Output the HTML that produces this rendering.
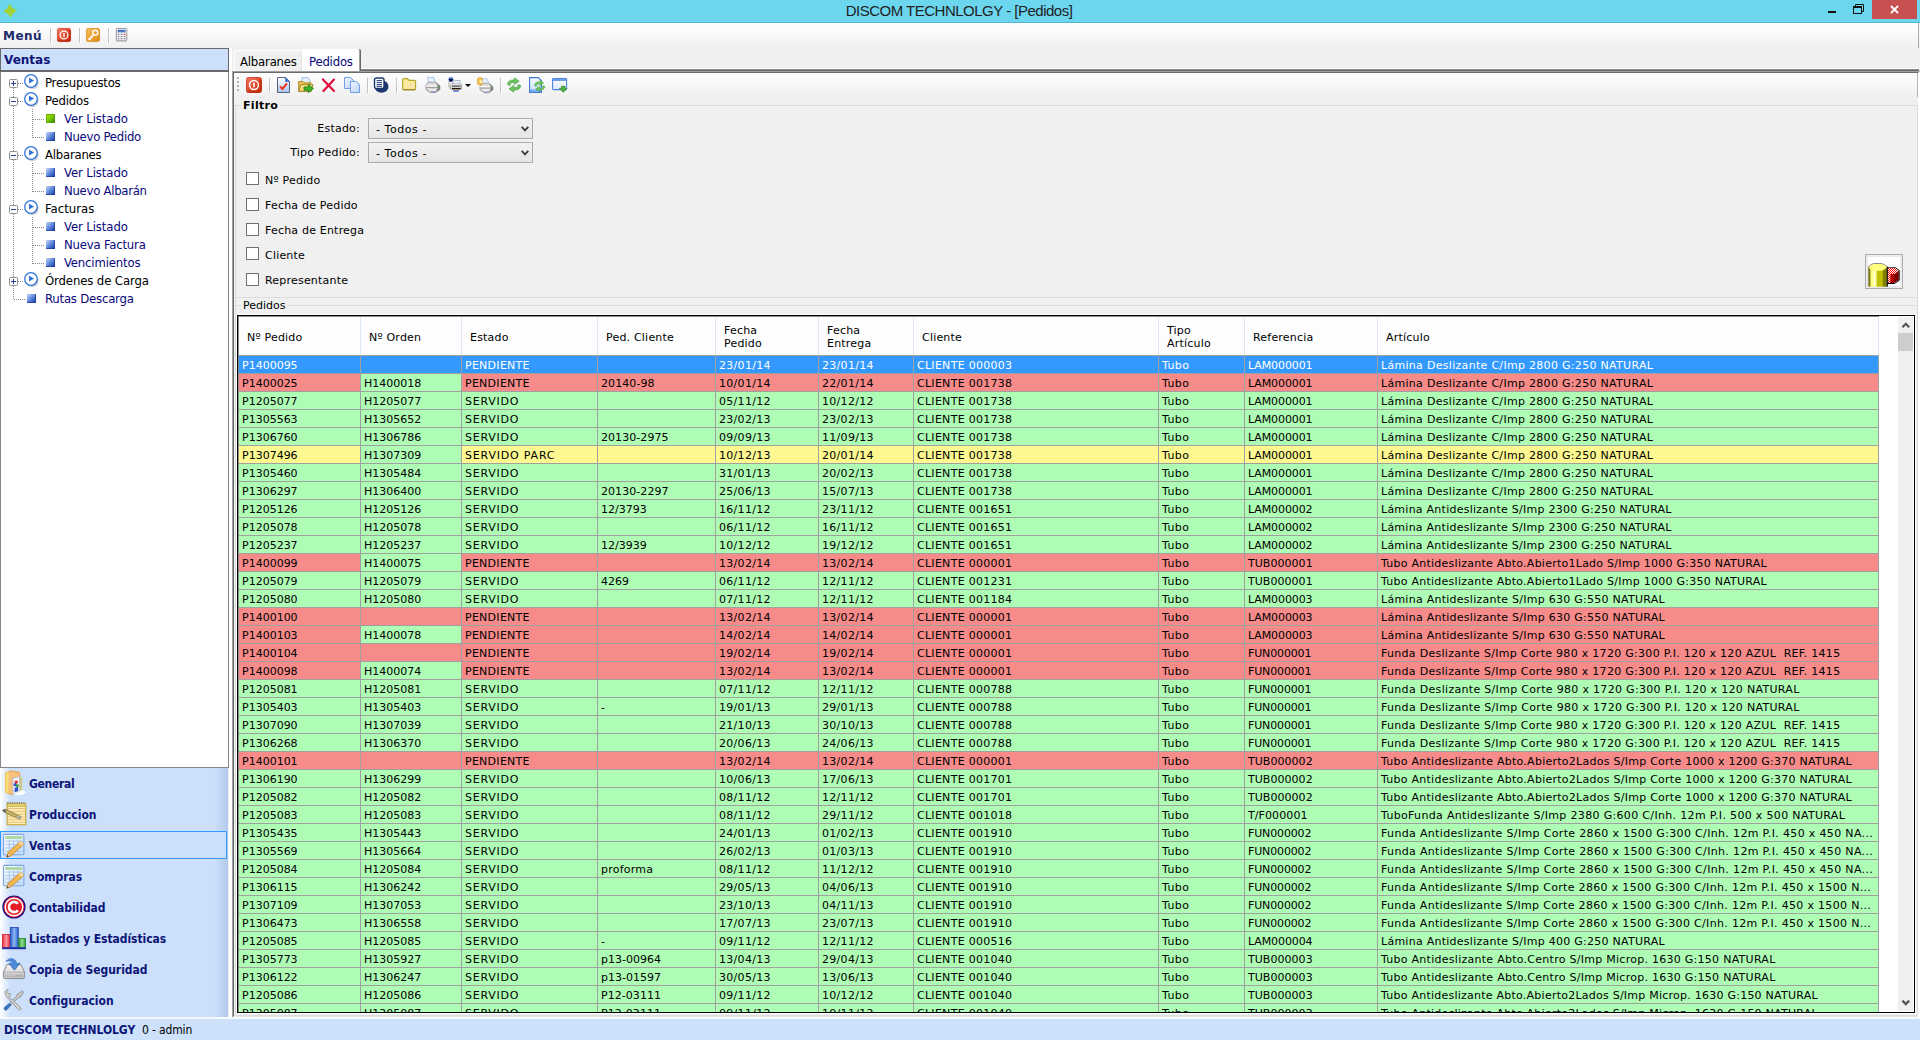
<!DOCTYPE html>
<html lang="es"><head><meta charset="utf-8"><title>DISCOM TECHNLOLGY - [Pedidos]</title>
<style>
*{box-sizing:border-box}
html,body{margin:0;padding:0}
body{width:1920px;height:1040px;overflow:hidden;background:#f0f0f0;position:relative;font-family:"DejaVu Sans","Liberation Sans",sans-serif;font-size:11px;color:#000}
div{position:absolute}
svg{display:block;position:absolute;left:0;top:0;overflow:visible}
/* title bar */
#titlebar{left:0;top:0;width:1920px;height:23px;background:#6bd6ee;border-bottom:1px solid #52b6ce}
#appicon{left:0;top:0;width:20px;height:20px}
#ttext{left:0;top:1px;width:1920px;text-align:center;font:15px/20px "Liberation Sans",sans-serif;color:#1e1e1e;letter-spacing:-0.5px;padding-right:2px}
#wmin{left:1828px;top:11px;width:8px;height:2px;background:#111}
#wres{left:1853px;top:4px;width:11px;height:10px}
#wclose{left:1872px;top:0;width:45px;height:19px;background:#c75050}
/* menu bar */
#menubar{left:0;top:23px;width:1920px;height:25px;background:linear-gradient(#fdfdfd 0,#fbfbfb 30%,#f0f0f0 100%)}
#menu{position:absolute;left:3px;top:5px;font:bold 12px/16px "DejaVu Sans",sans-serif;color:#1b2a6b;letter-spacing:.45px}
.msep{top:5px;width:1px;height:15px;background:#c4c4c4;border-right:1px solid #fff;box-sizing:content-box}
.mi{top:5px;width:14px;height:14px}
.mi svg{width:14px;height:14px}
/* left */
#lhdr{left:0;top:48px;width:229px;height:24px;background:#cce0fb;border:1px solid #696969;border-bottom-width:2px;font:bold 12px/22px "DejaVu Sans",sans-serif;color:#0c1478;padding-left:3px}
#tree{left:0;top:72px;width:229px;height:696px;background:#fff;box-shadow:inset 1px 0 #828790,inset -1px 0 #828790,inset 0 -1px #828790;overflow:hidden}
.tl{font:13px/18px "DejaVu Sans Condensed","DejaVu Sans",sans-serif;white-space:nowrap;height:18px;padding:0 2px}
.tp{color:#000}.tc{color:#08087c}
.ti{width:16px;height:16px}
.xb{width:9px;height:9px}
.vd{width:1px;background-image:linear-gradient(#8c8c8c 50%,transparent 50%);background-size:1px 2px}
.hd{height:1px;background-image:linear-gradient(90deg,#8c8c8c 50%,transparent 50%);background-size:2px 1px}
#nav{left:0;top:768px;width:228px;height:249px;background:linear-gradient(90deg,#fff 0,#cce0fb 10px,#cce0fb 214px,#b4caea 228px)}
.nb{left:0;width:227px;height:29px;font:bold 12px/27px "DejaVu Sans Condensed","DejaVu Sans",sans-serif;color:#0c1478;white-space:nowrap}
.nb span{position:absolute;left:29px;top:2px}
.nb.on{border:1px solid #3399ff;background:#cce0fb;height:28px}
.nb.on span{left:28px;top:1px}
.nb.on .ni{left:1px;top:1px}
.ni{left:2px;top:2px;width:24px;height:24px}
/* tabs */
#tabA{left:234px;top:50px;width:68px;height:21px;background:#f0f0f0;border:1px solid #fff;border-right-color:#e3e3e3;border-bottom:none;border-radius:2px 2px 0 0;font:13px/21px "DejaVu Sans Condensed","DejaVu Sans",sans-serif;letter-spacing:-.2px;padding-left:5px;white-space:nowrap}
#tabP{left:302px;top:49px;width:59px;height:23px;background:#fff;border-right:1px solid #696969;box-shadow:inset -1px 0 #a0a0a0;border-radius:0 2px 0 0;font:13px/25px "DejaVu Sans Condensed","DejaVu Sans",sans-serif;letter-spacing:-.2px;color:#08087c;padding-left:7px;white-space:nowrap}
#panel{left:232px;top:71px;width:1688px;height:947px;border-left:2px solid #696969;border-top:2px solid #696969;border-right:2px solid #fff;border-bottom:2px solid #fff}
#pbl{left:232px;top:71px;width:1px;height:946px;background:#a0a0a0}
#pbt{left:232px;top:71px;width:1687px;height:1px;background:#a0a0a0}
#panel>*{margin-left:-234px;margin-top:-73px}
#toolbar{left:234px;top:73px;width:1684px;height:24px;background:linear-gradient(#fdfdfd 0,#fafafa 30%,#f0f0f0 100%)}
#toolbar>*{margin:0}
#grip{left:3px;top:4px;width:2px;height:14px;background-image:linear-gradient(#b4b4b4 50%,transparent 50%);background-size:2px 4px}
.tbi{top:4px;width:16px;height:16px}
.tsep{top:5px;width:1px;height:15px;background:#c4c4c4;border-right:1px solid #fff;box-sizing:content-box}
.tdd{top:11px;width:0;height:0;border:3px solid transparent;border-top:3px solid #000;border-bottom:none}
.gline{left:235px;width:1683px;height:1px;background:#dcdcdc}
.gtitle{background:#f0f0f0;white-space:nowrap;line-height:13px;height:13px}
#gt1{left:241px;top:99px;font-weight:bold;padding:0 2px;letter-spacing:.3px}
#gt2{left:241px;top:299px;padding:0 2px}
#grright{left:1917px;top:105px;width:1px;height:911px;background:#dcdcdc}
#split{left:229px;top:48px;width:3px;height:969px;background:#fff}
.lbl{left:239px;width:121px;text-align:right;line-height:15px;white-space:nowrap;letter-spacing:.22px}
.sel1{left:368px;width:165px;height:21px;border:1px solid #acacac;background:linear-gradient(#f2f2f2,#e5e5e5);line-height:19px}
.sel1 span{position:absolute;left:7px;top:1px;letter-spacing:.55px}
.sel1 svg{left:152px;top:7px}
.cb{left:246px;width:13px;height:13px;background:#fff;border:1px solid #707070}
.cl{left:265px;line-height:15px;white-space:nowrap;letter-spacing:.2px;margin-top:-71px !important}
#cylbtn{left:1865px;top:254px;width:38px;height:35px;border:1px solid #acacac;background:#fff;box-shadow:inset 0 0 0 2px #ececec}
/* grid */
#grid{left:237px;top:315px;width:1678px;height:698px;background:#fff;border:1px solid #000;overflow:hidden;box-shadow:-1px -1px 0 #fff,1px 1px 0 #fff}
#gin{left:1px;top:1px;width:1675px;height:695px}
#glv{left:0;top:0;width:1px;height:696px;background:#8c8c8c}
#glh{left:0;top:0;width:1641px;height:1px;background:#8c8c8c}
#grid>*{margin:0}
#ghead{left:0;top:0;width:1640px;height:39px;background:#fdfdfd;border-bottom:1px solid #a0a0a0}
.hc{top:0;height:38px;border-right:1px solid #dde8f6;display:flex;align-items:center}
.hc span{padding-left:8px;line-height:13px;letter-spacing:.2px;white-space:nowrap;position:relative;top:1px}
.row{left:0;width:1640px;height:18px;border-bottom:1px solid #a0a0a0}
.c{top:0;height:17px;border-right:1px solid #a0a0a0;overflow:hidden;white-space:pre;line-height:19px;padding-left:3px}
.c span{display:inline-block}
.grn .c,.c.og{background:#affdb5}
.red .c{background:#f78b89}
.yel .c{background:#fdf890}
.sel .c{background:#3399ff;color:#fff}
.red .c.og,.yel .c.og{background:#affdb5}
#vsb{left:1658px;top:0;width:17px;height:695px;background:#f0f0f0;border:1px solid #fff;border-top:none}
#vsb .au{left:-1px;top:0;width:17px;height:17px}
#vsb .ad{left:-1px;top:677px;width:17px;height:17px}
#vsb .th{left:0;top:16px;width:15px;height:18px;background:#cdcdcd}
/* status */
#status{left:0;top:1017px;width:1920px;height:23px;background:#cde1fb;border-top:2px solid #f6f9fe;font:12px/20px "DejaVu Sans Condensed","DejaVu Sans",sans-serif;white-space:nowrap}
#status b{position:absolute;left:4px;top:1px;color:#0c1478;letter-spacing:-.05px}
#status span{position:absolute;left:142px;top:1px;letter-spacing:-.15px}

#mbr{left:1918px;top:23px;width:1px;height:25px;background:#a8a8a8}
#tbr{left:1683px;top:0;width:1px;height:24px;background:#b4b4b4}
#tabline{left:361px;top:68px;width:1558px;height:3px;background:linear-gradient(#fbfbfb 0,#fbfbfb 33.3%,#8a8a8a 33.3%,#8a8a8a 66.6%,#696969 66.6%)}
#grleft{left:235px;top:105px;width:1px;height:911px;background:#dcdcdc}

</style></head><body>
<div id="titlebar"><div id="appicon"><svg width="20" height="20" viewBox="0 0 20 20"><path d="M9.5 3.8 L12.3 7.8 L17.2 10.4 L13.2 13.2 L10.5 17.8 L7.8 13.8 L3.1 11.5 L7 8.6 Z" fill="#a0d23a"/></svg></div><div id="ttext">DISCOM TECHNLOLGY - [Pedidos]</div>
<div id="wmin"></div><div id="wres"><svg width="11" height="10" viewBox="0 0 11 10"><path d="M2.5 2.5V.5H10.5V7.5H8.5" fill="none" stroke="#111" stroke-width="1"/><rect x=".5" y="2.5" width="8" height="7" fill="none" stroke="#111" stroke-width="1"/><rect x="0" y="2" width="9" height="2" fill="#111"/></svg></div><div id="wclose"><svg width="45" height="19" viewBox="0 0 45 19"><path d="M19 6 L26 13 M26 6 L19 13" stroke="#fff" stroke-width="1.8" fill="none"/></svg></div></div>
<div id="menubar"><span id="menu">Menú</span><div class="msep" style="left:50px"></div><div class="mi" style="left:57px"><svg width="16" height="16" viewBox="0 0 16 16"><defs><linearGradient id="gpw" x1="0" y1="0" x2="1" y2="1"><stop offset="0" stop-color="#f28068"/><stop offset=".5" stop-color="#e2482c"/><stop offset="1" stop-color="#c42406"/></linearGradient></defs><rect x=".5" y=".5" width="15" height="15" rx="2" fill="url(#gpw)" stroke="#d04a30"/><path d="M1 14 Q1 15 2.5 15 H13.5 Q15 15 15 13.5 V3" fill="none" stroke="#b02808" stroke-width="1"/><circle cx="8" cy="8" r="4.4" fill="none" stroke="#fff" stroke-width="1.5"/><rect x="7.2" y="5.4" width="1.6" height="5.2" rx=".8" fill="#fff"/></svg></div><div class="msep" style="left:79px"></div><div class="mi" style="left:86px"><svg width="16" height="16" viewBox="0 0 16 16"><defs><linearGradient id="gky" x1="0" y1="0" x2="1" y2="1"><stop offset="0" stop-color="#f6c36a"/><stop offset=".5" stop-color="#eda02c"/><stop offset="1" stop-color="#dc8a14"/></linearGradient></defs><rect x=".5" y=".5" width="15" height="15" rx="2" fill="url(#gky)" stroke="#d8922c"/><circle cx="10.6" cy="5.4" r="2.9" fill="none" stroke="#fff" stroke-width="1.6"/><path d="M8.4 7.6 L2.6 13.4 M4 12 L5.6 13.6 M6 10 L7.4 11.4" stroke="#fff" stroke-width="1.6" fill="none"/></svg></div><div class="msep" style="left:108px"></div><div class="mi" style="left:115px"><svg width="16" height="16" viewBox="0 0 16 16"><rect x="1.5" y=".5" width="12" height="14" rx="1" fill="#f4f4f6" stroke="#8c8c94"/><rect x="3" y="2" width="9" height="3" fill="#4a78c8"/><g fill="#8a8a96"><rect x="3" y="6.5" width="2" height="1.4"/><rect x="6.5" y="6.5" width="2" height="1.4"/><rect x="10" y="6.5" width="2" height="1.4" fill="#e04848"/><rect x="3" y="9" width="2" height="1.4"/><rect x="6.5" y="9" width="2" height="1.4"/><rect x="10" y="9" width="2" height="1.4"/><rect x="3" y="11.5" width="2" height="1.4"/><rect x="6.5" y="11.5" width="2" height="1.4"/><rect x="10" y="11.5" width="2" height="1.4"/></g><rect x="1.5" y="14" width="12" height="1.5" fill="#b4b4bc"/></svg></div></div>
<div id="mbr"></div><div id="split"></div>
<div id="lhdr">Ventas</div>
<div id="tree"><div class="vd" style="left:13px;top:16px;height:212px"></div><div class="hd" style="left:18px;top:11px;width:6px"></div><div class="hd" style="left:18px;top:29px;width:6px"></div><div class="hd" style="left:33px;top:47px;width:12px"></div><div class="hd" style="left:33px;top:65px;width:12px"></div><div class="hd" style="left:18px;top:83px;width:6px"></div><div class="hd" style="left:33px;top:101px;width:12px"></div><div class="hd" style="left:33px;top:119px;width:12px"></div><div class="hd" style="left:18px;top:137px;width:6px"></div><div class="hd" style="left:33px;top:155px;width:12px"></div><div class="hd" style="left:33px;top:173px;width:12px"></div><div class="hd" style="left:33px;top:191px;width:12px"></div><div class="hd" style="left:18px;top:209px;width:6px"></div><div class="hd" style="left:14px;top:227px;width:12px"></div><div class="vd" style="left:32px;top:37px;height:29px"></div><div class="vd" style="left:32px;top:91px;height:29px"></div><div class="vd" style="left:32px;top:145px;height:47px"></div><div class="xb" style="left:9px;top:7px"><svg width="9" height="9" viewBox="0 0 9 9"><rect x=".5" y=".5" width="8" height="8" rx="1" fill="#fcfcfc" stroke="#919191"/><path d="M2 4.5H7M4.5 2V7" stroke="#2b3f94" stroke-width="1"/></svg></div><div class="ti" style="left:23px;top:1px"><svg width="16" height="16" viewBox="0 0 16 16"><circle cx="9.1" cy="9.5" r="6.7" fill="#b4b4b4" opacity=".6"/><circle cx="8" cy="8" r="6.3" fill="#fff" stroke="#2f74d8" stroke-width="1.3"/><path d="M6 4.8 L11.2 7.6 L6 10.4 Z" fill="#2f74d8"/></svg></div><div class="tl tp" style="left:43px;top:2px;letter-spacing:-0.21px">Presupuestos</div><div class="xb" style="left:9px;top:25px"><svg width="9" height="9" viewBox="0 0 9 9"><rect x=".5" y=".5" width="8" height="8" rx="1" fill="#fcfcfc" stroke="#919191"/><path d="M2 4.5H7" stroke="#2b3f94" stroke-width="1"/></svg></div><div class="ti" style="left:23px;top:19px"><svg width="16" height="16" viewBox="0 0 16 16"><circle cx="9.1" cy="9.5" r="6.7" fill="#b4b4b4" opacity=".6"/><circle cx="8" cy="8" r="6.3" fill="#fff" stroke="#2f74d8" stroke-width="1.3"/><path d="M6 4.8 L11.2 7.6 L6 10.4 Z" fill="#2f74d8"/></svg></div><div class="tl tp" style="left:43px;top:20px;letter-spacing:-0.19px">Pedidos</div><div class="ti" style="left:46px;top:42px"><svg width="9" height="9" viewBox="0 0 9 9"><defs><linearGradient id="gsg" x1="0" y1="0" x2="1" y2="1"><stop offset="0" stop-color="#b6f000"/><stop offset=".5" stop-color="#78c800"/><stop offset="1" stop-color="#2f7800"/></linearGradient></defs><rect width="9" height="9" fill="url(#gsg)"/><rect x=".5" y=".5" width="8" height="8" fill="none" stroke="#4c9800" stroke-opacity=".7"/></svg></div><div class="tl tc" style="left:62px;top:38px;letter-spacing:-0.1px">Ver Listado</div><div class="ti" style="left:46px;top:60px"><svg width="9" height="9" viewBox="0 0 9 9"><defs><linearGradient id="gsb" x1="0" y1="0" x2="1" y2="1"><stop offset="0" stop-color="#c8d8f6"/><stop offset=".5" stop-color="#5c86dc"/><stop offset="1" stop-color="#12349c"/></linearGradient></defs><rect width="9" height="9" fill="url(#gsb)"/><path d="M8.5 0V8.5H0" fill="none" stroke="#1c3c9c" stroke-opacity=".7"/></svg></div><div class="tl tc" style="left:62px;top:56px;letter-spacing:-0.27px">Nuevo Pedido</div><div class="xb" style="left:9px;top:79px"><svg width="9" height="9" viewBox="0 0 9 9"><rect x=".5" y=".5" width="8" height="8" rx="1" fill="#fcfcfc" stroke="#919191"/><path d="M2 4.5H7" stroke="#2b3f94" stroke-width="1"/></svg></div><div class="ti" style="left:23px;top:73px"><svg width="16" height="16" viewBox="0 0 16 16"><circle cx="9.1" cy="9.5" r="6.7" fill="#b4b4b4" opacity=".6"/><circle cx="8" cy="8" r="6.3" fill="#fff" stroke="#2f74d8" stroke-width="1.3"/><path d="M6 4.8 L11.2 7.6 L6 10.4 Z" fill="#2f74d8"/></svg></div><div class="tl tp" style="left:43px;top:74px;letter-spacing:-0.23px">Albaranes</div><div class="ti" style="left:46px;top:96px"><svg width="9" height="9" viewBox="0 0 9 9"><defs><linearGradient id="gsb" x1="0" y1="0" x2="1" y2="1"><stop offset="0" stop-color="#c8d8f6"/><stop offset=".5" stop-color="#5c86dc"/><stop offset="1" stop-color="#12349c"/></linearGradient></defs><rect width="9" height="9" fill="url(#gsb)"/><path d="M8.5 0V8.5H0" fill="none" stroke="#1c3c9c" stroke-opacity=".7"/></svg></div><div class="tl tc" style="left:62px;top:92px;letter-spacing:-0.1px">Ver Listado</div><div class="ti" style="left:46px;top:114px"><svg width="9" height="9" viewBox="0 0 9 9"><defs><linearGradient id="gsb" x1="0" y1="0" x2="1" y2="1"><stop offset="0" stop-color="#c8d8f6"/><stop offset=".5" stop-color="#5c86dc"/><stop offset="1" stop-color="#12349c"/></linearGradient></defs><rect width="9" height="9" fill="url(#gsb)"/><path d="M8.5 0V8.5H0" fill="none" stroke="#1c3c9c" stroke-opacity=".7"/></svg></div><div class="tl tc" style="left:62px;top:110px;letter-spacing:-0.28px">Nuevo Albarán</div><div class="xb" style="left:9px;top:133px"><svg width="9" height="9" viewBox="0 0 9 9"><rect x=".5" y=".5" width="8" height="8" rx="1" fill="#fcfcfc" stroke="#919191"/><path d="M2 4.5H7" stroke="#2b3f94" stroke-width="1"/></svg></div><div class="ti" style="left:23px;top:127px"><svg width="16" height="16" viewBox="0 0 16 16"><circle cx="9.1" cy="9.5" r="6.7" fill="#b4b4b4" opacity=".6"/><circle cx="8" cy="8" r="6.3" fill="#fff" stroke="#2f74d8" stroke-width="1.3"/><path d="M6 4.8 L11.2 7.6 L6 10.4 Z" fill="#2f74d8"/></svg></div><div class="tl tp" style="left:43px;top:128px;letter-spacing:0.01px">Facturas</div><div class="ti" style="left:46px;top:150px"><svg width="9" height="9" viewBox="0 0 9 9"><defs><linearGradient id="gsb" x1="0" y1="0" x2="1" y2="1"><stop offset="0" stop-color="#c8d8f6"/><stop offset=".5" stop-color="#5c86dc"/><stop offset="1" stop-color="#12349c"/></linearGradient></defs><rect width="9" height="9" fill="url(#gsb)"/><path d="M8.5 0V8.5H0" fill="none" stroke="#1c3c9c" stroke-opacity=".7"/></svg></div><div class="tl tc" style="left:62px;top:146px;letter-spacing:-0.1px">Ver Listado</div><div class="ti" style="left:46px;top:168px"><svg width="9" height="9" viewBox="0 0 9 9"><defs><linearGradient id="gsb" x1="0" y1="0" x2="1" y2="1"><stop offset="0" stop-color="#c8d8f6"/><stop offset=".5" stop-color="#5c86dc"/><stop offset="1" stop-color="#12349c"/></linearGradient></defs><rect width="9" height="9" fill="url(#gsb)"/><path d="M8.5 0V8.5H0" fill="none" stroke="#1c3c9c" stroke-opacity=".7"/></svg></div><div class="tl tc" style="left:62px;top:164px;letter-spacing:-0.2px">Nueva Factura</div><div class="ti" style="left:46px;top:186px"><svg width="9" height="9" viewBox="0 0 9 9"><defs><linearGradient id="gsb" x1="0" y1="0" x2="1" y2="1"><stop offset="0" stop-color="#c8d8f6"/><stop offset=".5" stop-color="#5c86dc"/><stop offset="1" stop-color="#12349c"/></linearGradient></defs><rect width="9" height="9" fill="url(#gsb)"/><path d="M8.5 0V8.5H0" fill="none" stroke="#1c3c9c" stroke-opacity=".7"/></svg></div><div class="tl tc" style="left:62px;top:182px;letter-spacing:-0.17px">Vencimientos</div><div class="xb" style="left:9px;top:205px"><svg width="9" height="9" viewBox="0 0 9 9"><rect x=".5" y=".5" width="8" height="8" rx="1" fill="#fcfcfc" stroke="#919191"/><path d="M2 4.5H7M4.5 2V7" stroke="#2b3f94" stroke-width="1"/></svg></div><div class="ti" style="left:23px;top:199px"><svg width="16" height="16" viewBox="0 0 16 16"><circle cx="9.1" cy="9.5" r="6.7" fill="#b4b4b4" opacity=".6"/><circle cx="8" cy="8" r="6.3" fill="#fff" stroke="#2f74d8" stroke-width="1.3"/><path d="M6 4.8 L11.2 7.6 L6 10.4 Z" fill="#2f74d8"/></svg></div><div class="tl tp" style="left:43px;top:200px;letter-spacing:-0.12px">Órdenes de Carga</div><div class="ti" style="left:27px;top:222px"><svg width="9" height="9" viewBox="0 0 9 9"><defs><linearGradient id="gsb" x1="0" y1="0" x2="1" y2="1"><stop offset="0" stop-color="#c8d8f6"/><stop offset=".5" stop-color="#5c86dc"/><stop offset="1" stop-color="#12349c"/></linearGradient></defs><rect width="9" height="9" fill="url(#gsb)"/><path d="M8.5 0V8.5H0" fill="none" stroke="#1c3c9c" stroke-opacity=".7"/></svg></div><div class="tl tc" style="left:43px;top:218px;letter-spacing:-0.21px">Rutas Descarga</div></div>
<div id="nav"><div class="nb" style="top:1px"><div class="ni"><svg width="24" height="24" viewBox="0 0 24 24"><g transform="translate(0,-2) scale(1.15)"><path d="M3 3.4 L8 1.6 L15.4 3V20.4L9 22.4L3 20.4Z" fill="#f8c07c" stroke="#e0a050" stroke-width=".8"/><path d="M3 3.4 L5.6 2.4V21.2L3 20.4Z" fill="#f8e070"/><path d="M9.4 8 L15.4 6.4V20.4L9.4 22.2Z" fill="#f0f0f4" stroke="#b4b4c0" stroke-width=".7"/><path d="M15.4 6.4 L17.6 8V21.6L15.4 20.4Z" fill="#c8c890"/><circle cx="12.4" cy="11.4" r="1.5" fill="#e03030"/><circle cx="11.4" cy="13.6" r="1.4" fill="#2c50c8"/><circle cx="13.4" cy="14.6" r="1.3" fill="#30a030"/><path d="M11 16.4 L14 15.4V19.4L11 20.2Z" fill="#2c50c8"/><path d="M17.6 18 L21 20.4L18 22.6H9.6Z" fill="#fff" opacity=".9"/></g></svg></div><span style="letter-spacing:-0.3px">General</span></div><div class="nb" style="top:32px"><div class="ni"><svg width="24" height="24" viewBox="0 0 24 24"><g transform="translate(-1.2,-2.2) scale(1.16)"><rect x="5.5" y="3.5" width="16" height="18" fill="#fbf4a8" stroke="#c8a83c" stroke-width="1"/><path d="M6 7.6H21M6 10H21M6 12.4H21M6 14.8H21M6 17.2H21M6 19.4H21" stroke="#e8b48c" stroke-width=".8"/><path d="M6 1.8V4.4M8 1.8V4.4M10 1.8V4.4M12 1.8V4.4M14 1.8V4.4M16 1.8V4.4M18 1.8V4.4M20 1.8V4.4" stroke="#707070" stroke-width=".9"/><rect x="5.5" y="3.5" width="16" height="2.4" fill="#e8d080" stroke="#c8a83c" stroke-width=".6"/><path d="M1.4 9 L4 8.2 L17.6 14.6 L16.6 16.8 L3 10.8Z" fill="#c8b46c" stroke="#847434" stroke-width=".7"/><path d="M1.4 9 L4 8.2 L4.8 10.4 L3 10.8Z" fill="#606060"/><path d="M15 13.4 L17.6 14.6 L16.6 16.8 L14 15.6Z" fill="#b0b0b0"/></g></svg></div><span style="letter-spacing:-0.02px">Produccion</span></div><div class="nb on" style="top:63px"><div class="ni"><svg width="24" height="24" viewBox="0 0 24 24"><defs><linearGradient id="gnv" x1="0" y1="0" x2="1" y2="1"><stop offset="0" stop-color="#fff"/><stop offset="1" stop-color="#c4dcf8"/></linearGradient></defs><g transform="translate(-2.4,-1.4) scale(1.13)"><rect x="3.5" y="2.5" width="18" height="18" rx="1" fill="url(#gnv)" stroke="#7ca8e4" stroke-width="1"/><rect x="5" y="4" width="15" height="2.4" fill="#a8d8a0"/><path d="M5 8.4H20M5 11.4H20M5 14.4H20M5 17.4H20M8.6 7V19.4M12.4 7V19.4M16.2 7V19.4" stroke="#a4c4ec" stroke-width=".8"/><path d="M18.6 8.6 L21.6 11 L10.4 21.2 L6.4 22.6 L7.4 18.6Z" fill="#f4b850" stroke="#c8842c" stroke-width=".8"/><path d="M18.6 8.6 L21.6 11 L19.8 12.6 L16.8 10.2Z" fill="#f8dca8"/><path d="M7.4 18.6 L10.4 21.2 L6.4 22.6Z" fill="#e8c8a0" stroke="#c8842c" stroke-width=".5"/><path d="M6.4 22.6 L6.9 20.8 L8.2 22Z" fill="#404040"/></g></svg></div><span style="letter-spacing:0.11px">Ventas</span></div><div class="nb" style="top:94px"><div class="ni"><svg width="24" height="24" viewBox="0 0 24 24"><defs><linearGradient id="gnv" x1="0" y1="0" x2="1" y2="1"><stop offset="0" stop-color="#fff"/><stop offset="1" stop-color="#c4dcf8"/></linearGradient></defs><g transform="translate(-2.4,-1.4) scale(1.13)"><rect x="3.5" y="2.5" width="18" height="18" rx="1" fill="url(#gnv)" stroke="#7ca8e4" stroke-width="1"/><rect x="5" y="4" width="15" height="2.4" fill="#a8d8a0"/><path d="M5 8.4H20M5 11.4H20M5 14.4H20M5 17.4H20M8.6 7V19.4M12.4 7V19.4M16.2 7V19.4" stroke="#a4c4ec" stroke-width=".8"/><path d="M18.6 8.6 L21.6 11 L10.4 21.2 L6.4 22.6 L7.4 18.6Z" fill="#f4b850" stroke="#c8842c" stroke-width=".8"/><path d="M18.6 8.6 L21.6 11 L19.8 12.6 L16.8 10.2Z" fill="#f8dca8"/><path d="M7.4 18.6 L10.4 21.2 L6.4 22.6Z" fill="#e8c8a0" stroke="#c8842c" stroke-width=".5"/><path d="M6.4 22.6 L6.9 20.8 L8.2 22Z" fill="#404040"/></g></svg></div><span style="letter-spacing:-0.02px">Compras</span></div><div class="nb" style="top:125px"><div class="ni"><svg width="24" height="24" viewBox="0 0 24 24"><circle cx="12" cy="12" r="11" fill="#e81c24" stroke="#1c0c8c" stroke-width="1.2"/><circle cx="12" cy="12" r="8.8" fill="none" stroke="#fff" stroke-width="1.5"/><path d="M16 8.8 A5.1 5.1 0 1 0 16 15.2" fill="none" stroke="#fff" stroke-width="2.6"/></svg></div><span style="letter-spacing:-0.04px">Contabilidad</span></div><div class="nb" style="top:156px"><div class="ni"><svg width="24" height="24" viewBox="0 0 24 24"><defs><linearGradient id="gl1" x1="0" y1="0" x2="1" y2="0"><stop offset="0" stop-color="#f0283c"/><stop offset=".5" stop-color="#fa9ca4"/><stop offset="1" stop-color="#f0283c"/></linearGradient><linearGradient id="gl2" x1="0" y1="0" x2="1" y2="0"><stop offset="0" stop-color="#2c5cd0"/><stop offset=".5" stop-color="#8cb4f0"/><stop offset="1" stop-color="#2c5cd0"/></linearGradient><linearGradient id="gl3" x1="0" y1="0" x2="1" y2="0"><stop offset="0" stop-color="#2c9c34"/><stop offset=".5" stop-color="#94dc94"/><stop offset="1" stop-color="#2c9c34"/></linearGradient></defs><rect x=".5" y="8.5" width="7.4" height="13" fill="url(#gl1)" stroke="#d01c30" stroke-width=".8"/><rect x="8.3" y="1.5" width="8" height="20" fill="url(#gl2)" stroke="#1c44b4" stroke-width=".8"/><rect x="16.7" y="12.5" width="6.8" height="9" fill="url(#gl3)" stroke="#1c8428" stroke-width=".8"/><rect x="0" y="21.4" width="24" height="1.8" fill="#1c2ca4"/></svg></div><span style="letter-spacing:-0.07px">Listados y Estadísticas</span></div><div class="nb" style="top:187px"><div class="ni"><svg width="24" height="24" viewBox="0 0 24 24"><defs><linearGradient id="gcs" x1="0" y1="0" x2="0" y2="1"><stop offset="0" stop-color="#f4f4f4"/><stop offset="1" stop-color="#c4c4c4"/></linearGradient></defs><path d="M1.6 15 L5 7.6H19L22.4 15V20.6Q22.4 21.6 21.4 21.6H2.6Q1.6 21.6 1.6 20.6Z" fill="url(#gcs)" stroke="#8c8c8c" stroke-width="1"/><path d="M1.8 15.2H22.2" stroke="#a4a4a4" stroke-width=".8"/><rect x="3" y="17.6" width="18" height="2.4" rx=".6" fill="#b0b0b0"/><path d="M4 18.8H14" stroke="#e8e8e8" stroke-width="1" stroke-dasharray="1 1"/><path d="M4 4.4C7 .4 13.6 .6 14.6 6.4H18L12.4 13.2L6.8 6.4H10.4C10 3.6 6.4 3 4 4.4Z" fill="#4c8cd8" stroke="#2c64b4" stroke-width=".7"/></svg></div><span style="letter-spacing:-0.02px">Copia de Seguridad</span></div><div class="nb" style="top:218px"><div class="ni"><svg width="24" height="24" viewBox="0 0 24 24"><path d="M20.6 3 L21.8 4.2 L18 9.4 L16.4 9.6 L9 17 L7.4 15.4 L14.8 8 L15 6.4Z" fill="#c8c8c8" stroke="#808080" stroke-width=".7"/><path d="M9 17 L5 21.6Q3.6 22.8 2.6 21.6Q1.6 20.4 2.8 19.2L7.4 15.4Z" fill="#3c74c4" stroke="#24509c" stroke-width=".7"/><path d="M3.4 5.8C2.4 3.6 4 1.6 6.4 1.8L4.8 3.8L6 5.6L8.4 5.4C8.8 7 7.8 8.4 6.6 8.6L18.6 19.4Q19.6 20.6 18.6 21.6Q17.6 22.6 16.4 21.6L5 9.2C4 8.6 3.6 7 3.4 5.8Z" fill="#d4d4d4" stroke="#808080" stroke-width=".7"/></svg></div><span style="letter-spacing:0.0px">Configuracion</span></div></div>
<div id="tabline"></div><div id="tabA">Albaranes</div><div id="tabP">Pedidos</div>
<div id="panel">
<div id="toolbar"><div id="grip"></div><div class="tbi" style="left:12px"><svg width="16" height="16" viewBox="0 0 16 16"><defs><linearGradient id="gpw" x1="0" y1="0" x2="1" y2="1"><stop offset="0" stop-color="#f28068"/><stop offset=".5" stop-color="#e2482c"/><stop offset="1" stop-color="#c42406"/></linearGradient></defs><rect x=".5" y=".5" width="15" height="15" rx="2" fill="url(#gpw)" stroke="#d04a30"/><path d="M1 14 Q1 15 2.5 15 H13.5 Q15 15 15 13.5 V3" fill="none" stroke="#b02808" stroke-width="1"/><circle cx="8" cy="8" r="4.4" fill="none" stroke="#fff" stroke-width="1.5"/><rect x="7.2" y="5.4" width="1.6" height="5.2" rx=".8" fill="#fff"/></svg></div><div class="tsep" style="left:35px"></div><div class="tbi" style="left:42px"><svg width="16" height="16" viewBox="0 0 16 16"><defs><linearGradient id="gdc" x1="0" y1="0" x2="0" y2="1"><stop offset="0" stop-color="#fff"/><stop offset="1" stop-color="#a8c6f4"/></linearGradient></defs><path d="M1.5 .5H9.5L13.5 4.5V15.5H1.5Z" fill="url(#gdc)" stroke="#56607a"/><path d="M9.5 .5V4.5H13.5Z" fill="#3f78d8" stroke="#2c5cb4" stroke-width=".6"/><path d="M4 9.4 L6.4 12 L11 6.4" fill="none" stroke="#f03218" stroke-width="2"/></svg></div><div class="tbi" style="left:64px"><svg width="16" height="16" viewBox="0 0 16 16"><path d="M4 .8H10L12 3V8H4Z" fill="#e6f0fc" stroke="#8ca8d8" stroke-width=".8"/><path d="M.6 4.5H5L6 5.8H13V14.5H.6Z" fill="#e8c050" stroke="#a88420" stroke-width=".9"/><path d="M.8 14.3 L3 7.6H15.2L13 14.3Z" fill="#f6dc82" stroke="#a88420" stroke-width=".9"/><path d="M6 10H10.4V7.6L15.4 11.6L10.4 15.6V13.2H6Z" fill="#3cb428" stroke="#1c7a10" stroke-width=".8"/></svg></div><div class="tbi" style="left:87px"><svg width="16" height="16" viewBox="0 0 16 16"><path d="M2 2.4 L13 14 M13 2.6 L2.4 14" stroke="#e0103c" stroke-width="2.2" stroke-linecap="round" fill="none"/></svg></div><div class="tbi" style="left:110px"><svg width="17" height="16" viewBox="0 0 17 16"><defs><linearGradient id="gcp" x1="0" y1="0" x2="1" y2="1"><stop offset="0" stop-color="#f4f8fe"/><stop offset="1" stop-color="#b8d0f6"/></linearGradient></defs><path d="M.5 .5H6.5L9.5 3.5V11.5H.5Z" fill="url(#gcp)" stroke="#6f9ce4"/><path d="M6.5 4.5H12.5L15.5 7.5V15.5H6.5Z" fill="url(#gcp)" stroke="#6f9ce4"/></svg></div><div class="tsep" style="left:133px"></div><div class="tbi" style="left:139px"><svg width="16" height="16" viewBox="0 0 16 16"><ellipse cx="8.5" cy="9.5" rx="7" ry="6.2" fill="#1d3870"/><rect x="1.5" y="1" width="9.5" height="10.5" rx="2" fill="#fff" stroke="#1d3870" stroke-width="1.4"/><path d="M3.6 3.6H9M3.6 5.6H9M3.6 7.6H9M3.6 9.4H9" stroke="#1d3870" stroke-width="1"/></svg></div><div class="tsep" style="left:162px"></div><div class="tbi" style="left:168px"><svg width="16" height="16" viewBox="0 0 16 16"><path d="M.6 3.4Q.6 1.6 2.4 1.6H5.4L7 3.4H12.6Q13.6 3.4 13.6 4.4V11.6Q13.6 12.6 12.6 12.6H1.6Q.6 12.6 .6 11.6Z" fill="#f8ec9c" stroke="#b4a428" stroke-width="1.1"/><path d="M1 12.8H13.4" stroke="#8c8018" stroke-width="1"/><path d="M6 6H13V12H6Z" fill="#fbdcb0" opacity=".55"/></svg></div><div class="tbi" style="left:191px"><svg width="16" height="16" viewBox="0 0 16 16"><path d="M2.1 .3H8.6L10.8 5.6H3.8Z" fill="#cfe0fa" stroke="#9cb4e0" stroke-width=".6"/><path d="M3 1.2H8L9.6 5H4.4Z" fill="#e6f0fe"/><path d="M.8 8.6 L3.2 5.2 H10.6 L15 9 V12.4 L10.6 15.6 H5.4 L.8 12.4Z" fill="#dcdcdc" stroke="#8c8c8c" stroke-width=".7"/><path d="M10.6 5.2 L15 9 V12.4 L10.6 15.6 L12.4 12 V8.6Z" fill="#808080"/><path d="M1.2 8.8 H12.2" stroke="#f8f8f8" stroke-width="1.1"/><path d="M1.4 10.6 L12.2 10.6" stroke="#9a9a9a" stroke-width="1"/><path d="M1.2 12.2 L5.6 14.8 H10.4 L12.2 12.2" fill="#f0f0f0" stroke="#8c8c8c" stroke-width=".6"/><path d="M5.8 14.9H10.2" stroke="#6c78c8" stroke-width=".7"/><circle cx="12.6" cy="10" r=".7" fill="#3cc83c"/></svg></div><div class="tbi" style="left:213px"><svg width="16" height="16" viewBox="0 0 16 16"><path d="M1.6 4.4H6V10.8L1.6 9.8Z" fill="#f4f4f4" stroke="#a8a098" stroke-width=".6"/><ellipse cx="3.9" cy="2.6" rx="2.4" ry="2.4" fill="#1438b4"/><ellipse cx="3.9" cy="2.9" rx="1.5" ry="1.1" fill="#050510"/><ellipse cx="3.9" cy="1.2" rx="1.2" ry=".6" fill="#8cc8f8"/><rect x="6" y="3.4" width="7" height="4" fill="#e6eefa" stroke="#a0a8b8" stroke-width=".7"/><rect x="3.2" y="7" width="11.4" height="5.4" rx=".6" fill="#d4d4d4" stroke="#888" stroke-width=".7"/><path d="M3.6 7.6H14.2" stroke="#f4f4f4" stroke-width=".8"/><rect x="5" y="8.6" width="8.6" height="1" fill="#303030"/><rect x="5" y="11" width="8.6" height="1.2" fill="#101010"/><rect x="7" y="12.2" width="4" height="1.2" fill="#f0901c"/><rect x="6.2" y="13.3" width="5.6" height="1.4" fill="#2c6cd0"/></svg></div><div class="tdd" style="left:231px"></div><div class="tbi" style="left:243px"><svg width="17" height="16" viewBox="0 0 17 16"><g transform="translate(2.2,1.4) scale(.92)"><path d="M2.1 .3H8.6L10.8 5.6H3.8Z" fill="#cfe0fa" stroke="#9cb4e0" stroke-width=".6"/><path d="M3 1.2H8L9.6 5H4.4Z" fill="#e6f0fe"/><path d="M.8 8.6 L3.2 5.2 H10.6 L15 9 V12.4 L10.6 15.6 H5.4 L.8 12.4Z" fill="#dcdcdc" stroke="#8c8c8c" stroke-width=".7"/><path d="M10.6 5.2 L15 9 V12.4 L10.6 15.6 L12.4 12 V8.6Z" fill="#808080"/><path d="M1.2 8.8 H12.2" stroke="#f8f8f8" stroke-width="1.1"/><path d="M1.4 10.6 L12.2 10.6" stroke="#9a9a9a" stroke-width="1"/><path d="M1.2 12.2 L5.6 14.8 H10.4 L12.2 12.2" fill="#f0f0f0" stroke="#8c8c8c" stroke-width=".6"/><path d="M5.8 14.9H10.2" stroke="#6c78c8" stroke-width=".7"/><circle cx="12.6" cy="10" r=".7" fill="#3cc83c"/></g><rect x=".7" y="1" width="4.6" height="6.6" rx="1" fill="#f8cc58" stroke="#d89c20" stroke-width=".9"/><rect x="2.8" y="3.4" width="2.6" height="2.6" fill="#fdf0c0"/></svg></div><div class="tsep" style="left:266px"></div><div class="tbi" style="left:272px"><svg width="16" height="16" viewBox="0 0 16 16"><path d="M1.6 7.6C1.6 4 5 2.4 8.4 3.2V.8L13.2 4.2L8.4 7.6V5.6C6.4 5 4.2 5.8 4 8.4Z" fill="#6cc264" stroke="#3f9c3c" stroke-width=".6"/><path d="M14.6 8.4C14.6 12 11.2 13.6 7.8 12.8V15.2L3 11.8L7.8 8.4V10.4C9.8 11 12 10.2 12.2 7.6Z" fill="#6cc264" stroke="#3f9c3c" stroke-width=".6"/></svg></div><div class="tbi" style="left:295px"><svg width="16" height="16" viewBox="0 0 16 16"><defs><linearGradient id="gdr" x1="0" y1="0" x2="0" y2="1"><stop offset="0" stop-color="#f8fbff"/><stop offset=".75" stop-color="#d4e4fa"/><stop offset=".85" stop-color="#6ca8f0"/><stop offset="1" stop-color="#a8c8f4"/></linearGradient></defs><path d="M.6 .6H9.4L12.4 3.6V15.4H.6Z" fill="url(#gdr)" stroke="#3c74d4" stroke-width="1.1"/><g transform="translate(4.2,2.6) scale(.8)"><path d="M1.6 7.6C1.6 4 5 2.4 8.4 3.2V.8L13.2 4.2L8.4 7.6V5.6C6.4 5 4.2 5.8 4 8.4Z" fill="#6cc264" stroke="#3f9c3c" stroke-width=".6"/><path d="M14.6 8.4C14.6 12 11.2 13.6 7.8 12.8V15.2L3 11.8L7.8 8.4V10.4C9.8 11 12 10.2 12.2 7.6Z" fill="#6cc264" stroke="#3f9c3c" stroke-width=".6"/></g></svg></div><div class="tbi" style="left:318px"><svg width="16" height="16" viewBox="0 0 16 16"><defs><linearGradient id="gwa" x1="0" y1="0" x2="0" y2="1"><stop offset="0" stop-color="#fff"/><stop offset="1" stop-color="#dce8f8"/></linearGradient></defs><rect x=".6" y="1.6" width="14" height="11" rx=".8" fill="url(#gwa)" stroke="#4c84dc" stroke-width="1.1"/><rect x="1" y="2" width="13.2" height="2" fill="#6ca0ec"/><path d="M9.4 9.2H13V11.4H15L11.2 15.4L7.4 11.4H9.4Z" fill="#4cac40" stroke="#2c8424" stroke-width=".6"/></svg></div><div id="tbr"></div></div>
<div class="gline" style="top:105px"></div><div class="gtitle" id="gt1">Filtro</div>
<div class="lbl" style="top:121px">Estado:</div><div class="sel1" style="top:118px"><span>- Todos -</span><svg width="8" height="6" viewBox="0 0 8 6"><path d="M.7 .8 L4 4.3 L7.3 .8" fill="none" stroke="#404040" stroke-width="1.9"/></svg></div>
<div class="lbl" style="top:145px">Tipo Pedido:</div><div class="sel1" style="top:142px"><span>- Todos -</span><svg width="8" height="6" viewBox="0 0 8 6"><path d="M.7 .8 L4 4.3 L7.3 .8" fill="none" stroke="#404040" stroke-width="1.9"/></svg></div>
<div class="cb" style="top:172px"></div><div class="cl" style="top:171px">Nº Pedido</div><div class="cb" style="top:198px"></div><div class="cl" style="top:196px">Fecha de Pedido</div><div class="cb" style="top:223px"></div><div class="cl" style="top:221px">Fecha de Entrega</div><div class="cb" style="top:247px"></div><div class="cl" style="top:246px">Cliente</div><div class="cb" style="top:273px"></div><div class="cl" style="top:271px">Representante</div>
<div id="cylbtn"><svg width="36" height="33" viewBox="0 0 36 33"><defs><pattern id="py" width="2" height="2" patternUnits="userSpaceOnUse"><rect width="2" height="2" fill="#ffff00"/><rect width="1" height="1" fill="#fff"/><rect x="1" y="1" width="1" height="1" fill="#fff"/></pattern><pattern id="pr" width="2" height="2" patternUnits="userSpaceOnUse"><rect width="2" height="2" fill="#ff0000"/><rect width="1" height="1" fill="#fff"/><rect x="1" y="1" width="1" height="1" fill="#fff"/></pattern><pattern id="pyd" width="2" height="2" patternUnits="userSpaceOnUse"><rect width="2" height="2" fill="#ffff00"/><rect width="1" height="1" fill="#808000"/><rect x="1" y="1" width="1" height="1" fill="#808000"/></pattern><pattern id="prd" width="2" height="2" patternUnits="userSpaceOnUse"><rect width="2" height="2" fill="#ff0000"/><rect width="1" height="1" fill="#800000"/><rect x="1" y="1" width="1" height="1" fill="#800000"/></pattern></defs><path d="M21 19H28V28H21Z" fill="url(#prd)"/><rect x="21" y="19" width="3.4" height="9" fill="url(#pr)"/><path d="M28 19 L32.8 15.8V25L28 28Z" fill="#800000"/><path d="M21 13H29L32.8 15.8L28 19H21Z" fill="url(#pr)"/><path d="M21 12.6H29.2L33.2 15.4V25.4L30.6 27.2L28.2 28.5H21" fill="none" stroke="#000" stroke-width="1"/><path d="M21 12.4H29.2" stroke="#707070" stroke-width=".8"/><g transform="translate(.6,.5)"><rect x="2" y="11.5" width="2.2" height="19.7" fill="#808000"/><rect x="4" y="11.5" width="6" height="19.7" fill="url(#py)"/><rect x="7" y="13" width="1.2" height="18.2" fill="#fff"/><rect x="10" y="11.5" width="6.4" height="19.7" fill="url(#pyd)"/><rect x="16.2" y="11.5" width="4" height="19.7" fill="#808000"/><rect x="20" y="11" width="1.2" height="20.2" fill="#000"/><path d="M2 11 L4 9.2 L7 8 H15 L18 9.2 L20 11 V12 L18 14 L15 15.2 H7 L4 14 L2 12Z" fill="url(#py)"/><path d="M2 11.4 L4 9.2 L7 8 H15 L18 9.2 L20 11" fill="none" stroke="#808080" stroke-width=".9"/><path d="M1.8 11V31" stroke="#707050" stroke-width=".7"/></g></svg></div>
<div class="gline" style="top:297px"></div>
<div class="gline" style="top:305px"></div><div class="gtitle" id="gt2">Pedidos</div>
<div id="grright"></div><div class="gline" style="top:1015px;height:2px;background:linear-gradient(#dcdcdc 50%,#e6e6e6 50%)"></div><div id="grleft"></div>
<div id="grid"><div id="glv"></div><div id="glh"></div><div id="gin"><div id="ghead"><div class="hc" style="left:0px;width:122px"><span>Nº Pedido</span></div><div class="hc" style="left:122px;width:101px"><span>Nº Orden</span></div><div class="hc" style="left:223px;width:136px"><span>Estado</span></div><div class="hc" style="left:359px;width:118px"><span>Ped. Cliente</span></div><div class="hc" style="left:477px;width:103px"><span>Fecha<br>Pedido</span></div><div class="hc" style="left:580px;width:95px"><span>Fecha<br>Entrega</span></div><div class="hc" style="left:675px;width:245px"><span>Cliente</span></div><div class="hc" style="left:920px;width:86px"><span>Tipo<br>Artículo</span></div><div class="hc" style="left:1006px;width:133px"><span>Referencia</span></div><div class="hc" style="left:1139px;width:501px"><span>Artículo</span></div></div><div class="row sel" style="top:39px"><div class="c" style="left:0px;width:122px"><span>P1400095</span></div><div class="c" style="left:122px;width:101px"><span></span></div><div class="c" style="left:223px;width:136px"><span style="letter-spacing:0.27px">PENDIENTE</span></div><div class="c" style="left:359px;width:118px"><span></span></div><div class="c" style="left:477px;width:103px"><span style="letter-spacing:0.3px">23/01/14</span></div><div class="c" style="left:580px;width:95px"><span style="letter-spacing:0.3px">23/01/14</span></div><div class="c" style="left:675px;width:245px"><span style="letter-spacing:0.28px">CLIENTE 000003</span></div><div class="c" style="left:920px;width:86px"><span style="letter-spacing:0.42px">Tubo</span></div><div class="c" style="left:1006px;width:133px"><span style="letter-spacing:-0.1px">LAM000001</span></div><div class="c" style="left:1139px;width:501px"><span style="letter-spacing:0.3px">Lámina Deslizante C/Imp 2800 G:250 NATURAL</span></div></div>
<div class="row red" style="top:57px"><div class="c" style="left:0px;width:122px"><span>P1400025</span></div><div class="c og" style="left:122px;width:101px"><span>H1400018</span></div><div class="c" style="left:223px;width:136px"><span style="letter-spacing:0.27px">PENDIENTE</span></div><div class="c" style="left:359px;width:118px"><span style="letter-spacing:0.08px">20140-98</span></div><div class="c" style="left:477px;width:103px"><span style="letter-spacing:0.3px">10/01/14</span></div><div class="c" style="left:580px;width:95px"><span style="letter-spacing:0.3px">22/01/14</span></div><div class="c" style="left:675px;width:245px"><span style="letter-spacing:0.28px">CLIENTE 001738</span></div><div class="c" style="left:920px;width:86px"><span style="letter-spacing:0.42px">Tubo</span></div><div class="c" style="left:1006px;width:133px"><span style="letter-spacing:-0.1px">LAM000001</span></div><div class="c" style="left:1139px;width:501px"><span style="letter-spacing:0.3px">Lámina Deslizante C/Imp 2800 G:250 NATURAL</span></div></div>
<div class="row grn" style="top:75px"><div class="c" style="left:0px;width:122px"><span>P1205077</span></div><div class="c" style="left:122px;width:101px"><span>H1205077</span></div><div class="c" style="left:223px;width:136px"><span style="letter-spacing:0.77px">SERVIDO</span></div><div class="c" style="left:359px;width:118px"><span></span></div><div class="c" style="left:477px;width:103px"><span style="letter-spacing:0.3px">05/11/12</span></div><div class="c" style="left:580px;width:95px"><span style="letter-spacing:0.3px">10/12/12</span></div><div class="c" style="left:675px;width:245px"><span style="letter-spacing:0.28px">CLIENTE 001738</span></div><div class="c" style="left:920px;width:86px"><span style="letter-spacing:0.42px">Tubo</span></div><div class="c" style="left:1006px;width:133px"><span style="letter-spacing:-0.1px">LAM000001</span></div><div class="c" style="left:1139px;width:501px"><span style="letter-spacing:0.3px">Lámina Deslizante C/Imp 2800 G:250 NATURAL</span></div></div>
<div class="row grn" style="top:93px"><div class="c" style="left:0px;width:122px"><span>P1305563</span></div><div class="c" style="left:122px;width:101px"><span>H1305652</span></div><div class="c" style="left:223px;width:136px"><span style="letter-spacing:0.77px">SERVIDO</span></div><div class="c" style="left:359px;width:118px"><span></span></div><div class="c" style="left:477px;width:103px"><span style="letter-spacing:0.3px">23/02/13</span></div><div class="c" style="left:580px;width:95px"><span style="letter-spacing:0.3px">23/02/13</span></div><div class="c" style="left:675px;width:245px"><span style="letter-spacing:0.28px">CLIENTE 001738</span></div><div class="c" style="left:920px;width:86px"><span style="letter-spacing:0.42px">Tubo</span></div><div class="c" style="left:1006px;width:133px"><span style="letter-spacing:-0.1px">LAM000001</span></div><div class="c" style="left:1139px;width:501px"><span style="letter-spacing:0.3px">Lámina Deslizante C/Imp 2800 G:250 NATURAL</span></div></div>
<div class="row grn" style="top:111px"><div class="c" style="left:0px;width:122px"><span>P1306760</span></div><div class="c" style="left:122px;width:101px"><span>H1306786</span></div><div class="c" style="left:223px;width:136px"><span style="letter-spacing:0.77px">SERVIDO</span></div><div class="c" style="left:359px;width:118px"><span style="letter-spacing:0.06px">20130-2975</span></div><div class="c" style="left:477px;width:103px"><span style="letter-spacing:0.3px">09/09/13</span></div><div class="c" style="left:580px;width:95px"><span style="letter-spacing:0.3px">11/09/13</span></div><div class="c" style="left:675px;width:245px"><span style="letter-spacing:0.28px">CLIENTE 001738</span></div><div class="c" style="left:920px;width:86px"><span style="letter-spacing:0.42px">Tubo</span></div><div class="c" style="left:1006px;width:133px"><span style="letter-spacing:-0.1px">LAM000001</span></div><div class="c" style="left:1139px;width:501px"><span style="letter-spacing:0.3px">Lámina Deslizante C/Imp 2800 G:250 NATURAL</span></div></div>
<div class="row yel" style="top:129px"><div class="c" style="left:0px;width:122px"><span>P1307496</span></div><div class="c og" style="left:122px;width:101px"><span>H1307309</span></div><div class="c" style="left:223px;width:136px"><span style="letter-spacing:0.81px">SERVIDO PARC</span></div><div class="c" style="left:359px;width:118px"><span></span></div><div class="c" style="left:477px;width:103px"><span style="letter-spacing:0.3px">10/12/13</span></div><div class="c" style="left:580px;width:95px"><span style="letter-spacing:0.3px">20/01/14</span></div><div class="c" style="left:675px;width:245px"><span style="letter-spacing:0.28px">CLIENTE 001738</span></div><div class="c" style="left:920px;width:86px"><span style="letter-spacing:0.42px">Tubo</span></div><div class="c" style="left:1006px;width:133px"><span style="letter-spacing:-0.1px">LAM000001</span></div><div class="c" style="left:1139px;width:501px"><span style="letter-spacing:0.3px">Lámina Deslizante C/Imp 2800 G:250 NATURAL</span></div></div>
<div class="row grn" style="top:147px"><div class="c" style="left:0px;width:122px"><span>P1305460</span></div><div class="c" style="left:122px;width:101px"><span>H1305484</span></div><div class="c" style="left:223px;width:136px"><span style="letter-spacing:0.77px">SERVIDO</span></div><div class="c" style="left:359px;width:118px"><span></span></div><div class="c" style="left:477px;width:103px"><span style="letter-spacing:0.3px">31/01/13</span></div><div class="c" style="left:580px;width:95px"><span style="letter-spacing:0.3px">20/02/13</span></div><div class="c" style="left:675px;width:245px"><span style="letter-spacing:0.28px">CLIENTE 001738</span></div><div class="c" style="left:920px;width:86px"><span style="letter-spacing:0.42px">Tubo</span></div><div class="c" style="left:1006px;width:133px"><span style="letter-spacing:-0.1px">LAM000001</span></div><div class="c" style="left:1139px;width:501px"><span style="letter-spacing:0.3px">Lámina Deslizante C/Imp 2800 G:250 NATURAL</span></div></div>
<div class="row grn" style="top:165px"><div class="c" style="left:0px;width:122px"><span>P1306297</span></div><div class="c" style="left:122px;width:101px"><span>H1306400</span></div><div class="c" style="left:223px;width:136px"><span style="letter-spacing:0.77px">SERVIDO</span></div><div class="c" style="left:359px;width:118px"><span style="letter-spacing:0.06px">20130-2297</span></div><div class="c" style="left:477px;width:103px"><span style="letter-spacing:0.3px">25/06/13</span></div><div class="c" style="left:580px;width:95px"><span style="letter-spacing:0.3px">15/07/13</span></div><div class="c" style="left:675px;width:245px"><span style="letter-spacing:0.28px">CLIENTE 001738</span></div><div class="c" style="left:920px;width:86px"><span style="letter-spacing:0.42px">Tubo</span></div><div class="c" style="left:1006px;width:133px"><span style="letter-spacing:-0.1px">LAM000001</span></div><div class="c" style="left:1139px;width:501px"><span style="letter-spacing:0.3px">Lámina Deslizante C/Imp 2800 G:250 NATURAL</span></div></div>
<div class="row grn" style="top:183px"><div class="c" style="left:0px;width:122px"><span>P1205126</span></div><div class="c" style="left:122px;width:101px"><span>H1205126</span></div><div class="c" style="left:223px;width:136px"><span style="letter-spacing:0.77px">SERVIDO</span></div><div class="c" style="left:359px;width:118px"><span>12/3793</span></div><div class="c" style="left:477px;width:103px"><span style="letter-spacing:0.3px">16/11/12</span></div><div class="c" style="left:580px;width:95px"><span style="letter-spacing:0.3px">23/11/12</span></div><div class="c" style="left:675px;width:245px"><span style="letter-spacing:0.28px">CLIENTE 001651</span></div><div class="c" style="left:920px;width:86px"><span style="letter-spacing:0.42px">Tubo</span></div><div class="c" style="left:1006px;width:133px"><span style="letter-spacing:-0.1px">LAM000002</span></div><div class="c" style="left:1139px;width:501px"><span style="letter-spacing:0.25px">Lámina Antideslizante S/Imp 2300 G:250 NATURAL</span></div></div>
<div class="row grn" style="top:201px"><div class="c" style="left:0px;width:122px"><span>P1205078</span></div><div class="c" style="left:122px;width:101px"><span>H1205078</span></div><div class="c" style="left:223px;width:136px"><span style="letter-spacing:0.77px">SERVIDO</span></div><div class="c" style="left:359px;width:118px"><span></span></div><div class="c" style="left:477px;width:103px"><span style="letter-spacing:0.3px">06/11/12</span></div><div class="c" style="left:580px;width:95px"><span style="letter-spacing:0.3px">16/11/12</span></div><div class="c" style="left:675px;width:245px"><span style="letter-spacing:0.28px">CLIENTE 001651</span></div><div class="c" style="left:920px;width:86px"><span style="letter-spacing:0.42px">Tubo</span></div><div class="c" style="left:1006px;width:133px"><span style="letter-spacing:-0.1px">LAM000002</span></div><div class="c" style="left:1139px;width:501px"><span style="letter-spacing:0.25px">Lámina Antideslizante S/Imp 2300 G:250 NATURAL</span></div></div>
<div class="row grn" style="top:219px"><div class="c" style="left:0px;width:122px"><span>P1205237</span></div><div class="c" style="left:122px;width:101px"><span>H1205237</span></div><div class="c" style="left:223px;width:136px"><span style="letter-spacing:0.77px">SERVIDO</span></div><div class="c" style="left:359px;width:118px"><span>12/3939</span></div><div class="c" style="left:477px;width:103px"><span style="letter-spacing:0.3px">10/12/12</span></div><div class="c" style="left:580px;width:95px"><span style="letter-spacing:0.3px">19/12/12</span></div><div class="c" style="left:675px;width:245px"><span style="letter-spacing:0.28px">CLIENTE 001651</span></div><div class="c" style="left:920px;width:86px"><span style="letter-spacing:0.42px">Tubo</span></div><div class="c" style="left:1006px;width:133px"><span style="letter-spacing:-0.1px">LAM000002</span></div><div class="c" style="left:1139px;width:501px"><span style="letter-spacing:0.25px">Lámina Antideslizante S/Imp 2300 G:250 NATURAL</span></div></div>
<div class="row red" style="top:237px"><div class="c" style="left:0px;width:122px"><span>P1400099</span></div><div class="c og" style="left:122px;width:101px"><span>H1400075</span></div><div class="c" style="left:223px;width:136px"><span style="letter-spacing:0.27px">PENDIENTE</span></div><div class="c" style="left:359px;width:118px"><span></span></div><div class="c" style="left:477px;width:103px"><span style="letter-spacing:0.3px">13/02/14</span></div><div class="c" style="left:580px;width:95px"><span style="letter-spacing:0.3px">13/02/14</span></div><div class="c" style="left:675px;width:245px"><span style="letter-spacing:0.28px">CLIENTE 000001</span></div><div class="c" style="left:920px;width:86px"><span style="letter-spacing:0.42px">Tubo</span></div><div class="c" style="left:1006px;width:133px"><span style="letter-spacing:0.04px">TUB000001</span></div><div class="c" style="left:1139px;width:501px"><span style="letter-spacing:0.25px">Tubo Antideslizante Abto.Abierto1Lado S/Imp 1000 G:350 NATURAL</span></div></div>
<div class="row grn" style="top:255px"><div class="c" style="left:0px;width:122px"><span>P1205079</span></div><div class="c" style="left:122px;width:101px"><span>H1205079</span></div><div class="c" style="left:223px;width:136px"><span style="letter-spacing:0.77px">SERVIDO</span></div><div class="c" style="left:359px;width:118px"><span>4269</span></div><div class="c" style="left:477px;width:103px"><span style="letter-spacing:0.3px">06/11/12</span></div><div class="c" style="left:580px;width:95px"><span style="letter-spacing:0.3px">12/11/12</span></div><div class="c" style="left:675px;width:245px"><span style="letter-spacing:0.28px">CLIENTE 001231</span></div><div class="c" style="left:920px;width:86px"><span style="letter-spacing:0.42px">Tubo</span></div><div class="c" style="left:1006px;width:133px"><span style="letter-spacing:0.04px">TUB000001</span></div><div class="c" style="left:1139px;width:501px"><span style="letter-spacing:0.25px">Tubo Antideslizante Abto.Abierto1Lado S/Imp 1000 G:350 NATURAL</span></div></div>
<div class="row grn" style="top:273px"><div class="c" style="left:0px;width:122px"><span>P1205080</span></div><div class="c" style="left:122px;width:101px"><span>H1205080</span></div><div class="c" style="left:223px;width:136px"><span style="letter-spacing:0.77px">SERVIDO</span></div><div class="c" style="left:359px;width:118px"><span></span></div><div class="c" style="left:477px;width:103px"><span style="letter-spacing:0.3px">07/11/12</span></div><div class="c" style="left:580px;width:95px"><span style="letter-spacing:0.3px">12/11/12</span></div><div class="c" style="left:675px;width:245px"><span style="letter-spacing:0.28px">CLIENTE 001184</span></div><div class="c" style="left:920px;width:86px"><span style="letter-spacing:0.42px">Tubo</span></div><div class="c" style="left:1006px;width:133px"><span style="letter-spacing:-0.1px">LAM000003</span></div><div class="c" style="left:1139px;width:501px"><span style="letter-spacing:0.26px">Lámina Antideslizante S/Imp 630 G:550 NATURAL</span></div></div>
<div class="row red" style="top:291px"><div class="c" style="left:0px;width:122px"><span>P1400100</span></div><div class="c" style="left:122px;width:101px"><span></span></div><div class="c" style="left:223px;width:136px"><span style="letter-spacing:0.27px">PENDIENTE</span></div><div class="c" style="left:359px;width:118px"><span></span></div><div class="c" style="left:477px;width:103px"><span style="letter-spacing:0.3px">13/02/14</span></div><div class="c" style="left:580px;width:95px"><span style="letter-spacing:0.3px">13/02/14</span></div><div class="c" style="left:675px;width:245px"><span style="letter-spacing:0.28px">CLIENTE 000001</span></div><div class="c" style="left:920px;width:86px"><span style="letter-spacing:0.42px">Tubo</span></div><div class="c" style="left:1006px;width:133px"><span style="letter-spacing:-0.1px">LAM000003</span></div><div class="c" style="left:1139px;width:501px"><span style="letter-spacing:0.26px">Lámina Antideslizante S/Imp 630 G:550 NATURAL</span></div></div>
<div class="row red" style="top:309px"><div class="c" style="left:0px;width:122px"><span>P1400103</span></div><div class="c og" style="left:122px;width:101px"><span>H1400078</span></div><div class="c" style="left:223px;width:136px"><span style="letter-spacing:0.27px">PENDIENTE</span></div><div class="c" style="left:359px;width:118px"><span></span></div><div class="c" style="left:477px;width:103px"><span style="letter-spacing:0.3px">14/02/14</span></div><div class="c" style="left:580px;width:95px"><span style="letter-spacing:0.3px">14/02/14</span></div><div class="c" style="left:675px;width:245px"><span style="letter-spacing:0.28px">CLIENTE 000001</span></div><div class="c" style="left:920px;width:86px"><span style="letter-spacing:0.42px">Tubo</span></div><div class="c" style="left:1006px;width:133px"><span style="letter-spacing:-0.1px">LAM000003</span></div><div class="c" style="left:1139px;width:501px"><span style="letter-spacing:0.26px">Lámina Antideslizante S/Imp 630 G:550 NATURAL</span></div></div>
<div class="row red" style="top:327px"><div class="c" style="left:0px;width:122px"><span>P1400104</span></div><div class="c" style="left:122px;width:101px"><span></span></div><div class="c" style="left:223px;width:136px"><span style="letter-spacing:0.27px">PENDIENTE</span></div><div class="c" style="left:359px;width:118px"><span></span></div><div class="c" style="left:477px;width:103px"><span style="letter-spacing:0.3px">19/02/14</span></div><div class="c" style="left:580px;width:95px"><span style="letter-spacing:0.3px">19/02/14</span></div><div class="c" style="left:675px;width:245px"><span style="letter-spacing:0.28px">CLIENTE 000001</span></div><div class="c" style="left:920px;width:86px"><span style="letter-spacing:0.42px">Tubo</span></div><div class="c" style="left:1006px;width:133px"><span style="letter-spacing:-0.14px">FUN000001</span></div><div class="c" style="left:1139px;width:501px"><span style="letter-spacing:0.29px">Funda Deslizante S/Imp Corte 980 x 1720 G:300 P.I. 120 x 120 AZUL  REF. 1415</span></div></div>
<div class="row red" style="top:345px"><div class="c" style="left:0px;width:122px"><span>P1400098</span></div><div class="c og" style="left:122px;width:101px"><span>H1400074</span></div><div class="c" style="left:223px;width:136px"><span style="letter-spacing:0.27px">PENDIENTE</span></div><div class="c" style="left:359px;width:118px"><span></span></div><div class="c" style="left:477px;width:103px"><span style="letter-spacing:0.3px">13/02/14</span></div><div class="c" style="left:580px;width:95px"><span style="letter-spacing:0.3px">13/02/14</span></div><div class="c" style="left:675px;width:245px"><span style="letter-spacing:0.28px">CLIENTE 000001</span></div><div class="c" style="left:920px;width:86px"><span style="letter-spacing:0.42px">Tubo</span></div><div class="c" style="left:1006px;width:133px"><span style="letter-spacing:-0.14px">FUN000001</span></div><div class="c" style="left:1139px;width:501px"><span style="letter-spacing:0.29px">Funda Deslizante S/Imp Corte 980 x 1720 G:300 P.I. 120 x 120 AZUL  REF. 1415</span></div></div>
<div class="row grn" style="top:363px"><div class="c" style="left:0px;width:122px"><span>P1205081</span></div><div class="c" style="left:122px;width:101px"><span>H1205081</span></div><div class="c" style="left:223px;width:136px"><span style="letter-spacing:0.77px">SERVIDO</span></div><div class="c" style="left:359px;width:118px"><span></span></div><div class="c" style="left:477px;width:103px"><span style="letter-spacing:0.3px">07/11/12</span></div><div class="c" style="left:580px;width:95px"><span style="letter-spacing:0.3px">12/11/12</span></div><div class="c" style="left:675px;width:245px"><span style="letter-spacing:0.28px">CLIENTE 000788</span></div><div class="c" style="left:920px;width:86px"><span style="letter-spacing:0.42px">Tubo</span></div><div class="c" style="left:1006px;width:133px"><span style="letter-spacing:-0.14px">FUN000001</span></div><div class="c" style="left:1139px;width:501px"><span style="letter-spacing:0.31px">Funda Deslizante S/Imp Corte 980 x 1720 G:300 P.I. 120 x 120 NATURAL</span></div></div>
<div class="row grn" style="top:381px"><div class="c" style="left:0px;width:122px"><span>P1305403</span></div><div class="c" style="left:122px;width:101px"><span>H1305403</span></div><div class="c" style="left:223px;width:136px"><span style="letter-spacing:0.77px">SERVIDO</span></div><div class="c" style="left:359px;width:118px"><span>-</span></div><div class="c" style="left:477px;width:103px"><span style="letter-spacing:0.3px">19/01/13</span></div><div class="c" style="left:580px;width:95px"><span style="letter-spacing:0.3px">29/01/13</span></div><div class="c" style="left:675px;width:245px"><span style="letter-spacing:0.28px">CLIENTE 000788</span></div><div class="c" style="left:920px;width:86px"><span style="letter-spacing:0.42px">Tubo</span></div><div class="c" style="left:1006px;width:133px"><span style="letter-spacing:-0.14px">FUN000001</span></div><div class="c" style="left:1139px;width:501px"><span style="letter-spacing:0.31px">Funda Deslizante S/Imp Corte 980 x 1720 G:300 P.I. 120 x 120 NATURAL</span></div></div>
<div class="row grn" style="top:399px"><div class="c" style="left:0px;width:122px"><span>P1307090</span></div><div class="c" style="left:122px;width:101px"><span>H1307039</span></div><div class="c" style="left:223px;width:136px"><span style="letter-spacing:0.77px">SERVIDO</span></div><div class="c" style="left:359px;width:118px"><span></span></div><div class="c" style="left:477px;width:103px"><span style="letter-spacing:0.3px">21/10/13</span></div><div class="c" style="left:580px;width:95px"><span style="letter-spacing:0.3px">30/10/13</span></div><div class="c" style="left:675px;width:245px"><span style="letter-spacing:0.28px">CLIENTE 000788</span></div><div class="c" style="left:920px;width:86px"><span style="letter-spacing:0.42px">Tubo</span></div><div class="c" style="left:1006px;width:133px"><span style="letter-spacing:-0.14px">FUN000001</span></div><div class="c" style="left:1139px;width:501px"><span style="letter-spacing:0.29px">Funda Deslizante S/Imp Corte 980 x 1720 G:300 P.I. 120 x 120 AZUL  REF. 1415</span></div></div>
<div class="row grn" style="top:417px"><div class="c" style="left:0px;width:122px"><span>P1306268</span></div><div class="c" style="left:122px;width:101px"><span>H1306370</span></div><div class="c" style="left:223px;width:136px"><span style="letter-spacing:0.77px">SERVIDO</span></div><div class="c" style="left:359px;width:118px"><span></span></div><div class="c" style="left:477px;width:103px"><span style="letter-spacing:0.3px">20/06/13</span></div><div class="c" style="left:580px;width:95px"><span style="letter-spacing:0.3px">24/06/13</span></div><div class="c" style="left:675px;width:245px"><span style="letter-spacing:0.28px">CLIENTE 000788</span></div><div class="c" style="left:920px;width:86px"><span style="letter-spacing:0.42px">Tubo</span></div><div class="c" style="left:1006px;width:133px"><span style="letter-spacing:-0.14px">FUN000001</span></div><div class="c" style="left:1139px;width:501px"><span style="letter-spacing:0.29px">Funda Deslizante S/Imp Corte 980 x 1720 G:300 P.I. 120 x 120 AZUL  REF. 1415</span></div></div>
<div class="row red" style="top:435px"><div class="c" style="left:0px;width:122px"><span>P1400101</span></div><div class="c" style="left:122px;width:101px"><span></span></div><div class="c" style="left:223px;width:136px"><span style="letter-spacing:0.27px">PENDIENTE</span></div><div class="c" style="left:359px;width:118px"><span></span></div><div class="c" style="left:477px;width:103px"><span style="letter-spacing:0.3px">13/02/14</span></div><div class="c" style="left:580px;width:95px"><span style="letter-spacing:0.3px">13/02/14</span></div><div class="c" style="left:675px;width:245px"><span style="letter-spacing:0.28px">CLIENTE 000001</span></div><div class="c" style="left:920px;width:86px"><span style="letter-spacing:0.42px">Tubo</span></div><div class="c" style="left:1006px;width:133px"><span style="letter-spacing:0.04px">TUB000002</span></div><div class="c" style="left:1139px;width:501px"><span style="letter-spacing:0.26px">Tubo Antideslizante Abto.Abierto2Lados S/Imp Corte 1000 x 1200 G:370 NATURAL</span></div></div>
<div class="row grn" style="top:453px"><div class="c" style="left:0px;width:122px"><span>P1306190</span></div><div class="c" style="left:122px;width:101px"><span>H1306299</span></div><div class="c" style="left:223px;width:136px"><span style="letter-spacing:0.77px">SERVIDO</span></div><div class="c" style="left:359px;width:118px"><span></span></div><div class="c" style="left:477px;width:103px"><span style="letter-spacing:0.3px">10/06/13</span></div><div class="c" style="left:580px;width:95px"><span style="letter-spacing:0.3px">17/06/13</span></div><div class="c" style="left:675px;width:245px"><span style="letter-spacing:0.28px">CLIENTE 001701</span></div><div class="c" style="left:920px;width:86px"><span style="letter-spacing:0.42px">Tubo</span></div><div class="c" style="left:1006px;width:133px"><span style="letter-spacing:0.04px">TUB000002</span></div><div class="c" style="left:1139px;width:501px"><span style="letter-spacing:0.26px">Tubo Antideslizante Abto.Abierto2Lados S/Imp Corte 1000 x 1200 G:370 NATURAL</span></div></div>
<div class="row grn" style="top:471px"><div class="c" style="left:0px;width:122px"><span>P1205082</span></div><div class="c" style="left:122px;width:101px"><span>H1205082</span></div><div class="c" style="left:223px;width:136px"><span style="letter-spacing:0.77px">SERVIDO</span></div><div class="c" style="left:359px;width:118px"><span></span></div><div class="c" style="left:477px;width:103px"><span style="letter-spacing:0.3px">08/11/12</span></div><div class="c" style="left:580px;width:95px"><span style="letter-spacing:0.3px">12/11/12</span></div><div class="c" style="left:675px;width:245px"><span style="letter-spacing:0.28px">CLIENTE 001701</span></div><div class="c" style="left:920px;width:86px"><span style="letter-spacing:0.42px">Tubo</span></div><div class="c" style="left:1006px;width:133px"><span style="letter-spacing:0.04px">TUB000002</span></div><div class="c" style="left:1139px;width:501px"><span style="letter-spacing:0.26px">Tubo Antideslizante Abto.Abierto2Lados S/Imp Corte 1000 x 1200 G:370 NATURAL</span></div></div>
<div class="row grn" style="top:489px"><div class="c" style="left:0px;width:122px"><span>P1205083</span></div><div class="c" style="left:122px;width:101px"><span>H1205083</span></div><div class="c" style="left:223px;width:136px"><span style="letter-spacing:0.77px">SERVIDO</span></div><div class="c" style="left:359px;width:118px"><span></span></div><div class="c" style="left:477px;width:103px"><span style="letter-spacing:0.3px">08/11/12</span></div><div class="c" style="left:580px;width:95px"><span style="letter-spacing:0.3px">29/11/12</span></div><div class="c" style="left:675px;width:245px"><span style="letter-spacing:0.28px">CLIENTE 001018</span></div><div class="c" style="left:920px;width:86px"><span style="letter-spacing:0.42px">Tubo</span></div><div class="c" style="left:1006px;width:133px"><span style="letter-spacing:0.09px">T/F000001</span></div><div class="c" style="left:1139px;width:501px"><span style="letter-spacing:0.33px">TuboFunda Antideslizante S/Imp 2380 G:600 C/Inh. 12m P.I. 500 x 500 NATURAL</span></div></div>
<div class="row grn" style="top:507px"><div class="c" style="left:0px;width:122px"><span>P1305435</span></div><div class="c" style="left:122px;width:101px"><span>H1305443</span></div><div class="c" style="left:223px;width:136px"><span style="letter-spacing:0.77px">SERVIDO</span></div><div class="c" style="left:359px;width:118px"><span></span></div><div class="c" style="left:477px;width:103px"><span style="letter-spacing:0.3px">24/01/13</span></div><div class="c" style="left:580px;width:95px"><span style="letter-spacing:0.3px">01/02/13</span></div><div class="c" style="left:675px;width:245px"><span style="letter-spacing:0.28px">CLIENTE 001910</span></div><div class="c" style="left:920px;width:86px"><span style="letter-spacing:0.42px">Tubo</span></div><div class="c" style="left:1006px;width:133px"><span style="letter-spacing:-0.14px">FUN000002</span></div><div class="c" style="left:1139px;width:501px"><span style="letter-spacing:0.34px">Funda Antideslizante S/Imp Corte 2860 x 1500 G:300 C/Inh. 12m P.I. 450 x 450 NA...</span></div></div>
<div class="row grn" style="top:525px"><div class="c" style="left:0px;width:122px"><span>P1305569</span></div><div class="c" style="left:122px;width:101px"><span>H1305664</span></div><div class="c" style="left:223px;width:136px"><span style="letter-spacing:0.77px">SERVIDO</span></div><div class="c" style="left:359px;width:118px"><span></span></div><div class="c" style="left:477px;width:103px"><span style="letter-spacing:0.3px">26/02/13</span></div><div class="c" style="left:580px;width:95px"><span style="letter-spacing:0.3px">01/03/13</span></div><div class="c" style="left:675px;width:245px"><span style="letter-spacing:0.28px">CLIENTE 001910</span></div><div class="c" style="left:920px;width:86px"><span style="letter-spacing:0.42px">Tubo</span></div><div class="c" style="left:1006px;width:133px"><span style="letter-spacing:-0.14px">FUN000002</span></div><div class="c" style="left:1139px;width:501px"><span style="letter-spacing:0.34px">Funda Antideslizante S/Imp Corte 2860 x 1500 G:300 C/Inh. 12m P.I. 450 x 450 NA...</span></div></div>
<div class="row grn" style="top:543px"><div class="c" style="left:0px;width:122px"><span>P1205084</span></div><div class="c" style="left:122px;width:101px"><span>H1205084</span></div><div class="c" style="left:223px;width:136px"><span style="letter-spacing:0.77px">SERVIDO</span></div><div class="c" style="left:359px;width:118px"><span style="letter-spacing:0.23px">proforma</span></div><div class="c" style="left:477px;width:103px"><span style="letter-spacing:0.3px">08/11/12</span></div><div class="c" style="left:580px;width:95px"><span style="letter-spacing:0.3px">11/12/12</span></div><div class="c" style="left:675px;width:245px"><span style="letter-spacing:0.28px">CLIENTE 001910</span></div><div class="c" style="left:920px;width:86px"><span style="letter-spacing:0.42px">Tubo</span></div><div class="c" style="left:1006px;width:133px"><span style="letter-spacing:-0.14px">FUN000002</span></div><div class="c" style="left:1139px;width:501px"><span style="letter-spacing:0.34px">Funda Antideslizante S/Imp Corte 2860 x 1500 G:300 C/Inh. 12m P.I. 450 x 450 NA...</span></div></div>
<div class="row grn" style="top:561px"><div class="c" style="left:0px;width:122px"><span>P1306115</span></div><div class="c" style="left:122px;width:101px"><span>H1306242</span></div><div class="c" style="left:223px;width:136px"><span style="letter-spacing:0.77px">SERVIDO</span></div><div class="c" style="left:359px;width:118px"><span></span></div><div class="c" style="left:477px;width:103px"><span style="letter-spacing:0.3px">29/05/13</span></div><div class="c" style="left:580px;width:95px"><span style="letter-spacing:0.3px">04/06/13</span></div><div class="c" style="left:675px;width:245px"><span style="letter-spacing:0.28px">CLIENTE 001910</span></div><div class="c" style="left:920px;width:86px"><span style="letter-spacing:0.42px">Tubo</span></div><div class="c" style="left:1006px;width:133px"><span style="letter-spacing:-0.14px">FUN000002</span></div><div class="c" style="left:1139px;width:501px"><span style="letter-spacing:0.32px">Funda Antideslizante S/Imp Corte 2860 x 1500 G:300 C/Inh. 12m P.I. 450 x 1500 N...</span></div></div>
<div class="row grn" style="top:579px"><div class="c" style="left:0px;width:122px"><span>P1307109</span></div><div class="c" style="left:122px;width:101px"><span>H1307053</span></div><div class="c" style="left:223px;width:136px"><span style="letter-spacing:0.77px">SERVIDO</span></div><div class="c" style="left:359px;width:118px"><span></span></div><div class="c" style="left:477px;width:103px"><span style="letter-spacing:0.3px">23/10/13</span></div><div class="c" style="left:580px;width:95px"><span style="letter-spacing:0.3px">04/11/13</span></div><div class="c" style="left:675px;width:245px"><span style="letter-spacing:0.28px">CLIENTE 001910</span></div><div class="c" style="left:920px;width:86px"><span style="letter-spacing:0.42px">Tubo</span></div><div class="c" style="left:1006px;width:133px"><span style="letter-spacing:-0.14px">FUN000002</span></div><div class="c" style="left:1139px;width:501px"><span style="letter-spacing:0.32px">Funda Antideslizante S/Imp Corte 2860 x 1500 G:300 C/Inh. 12m P.I. 450 x 1500 N...</span></div></div>
<div class="row grn" style="top:597px"><div class="c" style="left:0px;width:122px"><span>P1306473</span></div><div class="c" style="left:122px;width:101px"><span>H1306558</span></div><div class="c" style="left:223px;width:136px"><span style="letter-spacing:0.77px">SERVIDO</span></div><div class="c" style="left:359px;width:118px"><span></span></div><div class="c" style="left:477px;width:103px"><span style="letter-spacing:0.3px">17/07/13</span></div><div class="c" style="left:580px;width:95px"><span style="letter-spacing:0.3px">23/07/13</span></div><div class="c" style="left:675px;width:245px"><span style="letter-spacing:0.28px">CLIENTE 001910</span></div><div class="c" style="left:920px;width:86px"><span style="letter-spacing:0.42px">Tubo</span></div><div class="c" style="left:1006px;width:133px"><span style="letter-spacing:-0.14px">FUN000002</span></div><div class="c" style="left:1139px;width:501px"><span style="letter-spacing:0.32px">Funda Antideslizante S/Imp Corte 2860 x 1500 G:300 C/Inh. 12m P.I. 450 x 1500 N...</span></div></div>
<div class="row grn" style="top:615px"><div class="c" style="left:0px;width:122px"><span>P1205085</span></div><div class="c" style="left:122px;width:101px"><span>H1205085</span></div><div class="c" style="left:223px;width:136px"><span style="letter-spacing:0.77px">SERVIDO</span></div><div class="c" style="left:359px;width:118px"><span>-</span></div><div class="c" style="left:477px;width:103px"><span style="letter-spacing:0.3px">09/11/12</span></div><div class="c" style="left:580px;width:95px"><span style="letter-spacing:0.3px">12/11/12</span></div><div class="c" style="left:675px;width:245px"><span style="letter-spacing:0.28px">CLIENTE 000516</span></div><div class="c" style="left:920px;width:86px"><span style="letter-spacing:0.42px">Tubo</span></div><div class="c" style="left:1006px;width:133px"><span style="letter-spacing:-0.1px">LAM000004</span></div><div class="c" style="left:1139px;width:501px"><span style="letter-spacing:0.26px">Lámina Antideslizante S/Imp 400 G:250 NATURAL</span></div></div>
<div class="row grn" style="top:633px"><div class="c" style="left:0px;width:122px"><span>P1305773</span></div><div class="c" style="left:122px;width:101px"><span>H1305927</span></div><div class="c" style="left:223px;width:136px"><span style="letter-spacing:0.77px">SERVIDO</span></div><div class="c" style="left:359px;width:118px"><span>p13-00964</span></div><div class="c" style="left:477px;width:103px"><span style="letter-spacing:0.3px">13/04/13</span></div><div class="c" style="left:580px;width:95px"><span style="letter-spacing:0.3px">29/04/13</span></div><div class="c" style="left:675px;width:245px"><span style="letter-spacing:0.28px">CLIENTE 001040</span></div><div class="c" style="left:920px;width:86px"><span style="letter-spacing:0.42px">Tubo</span></div><div class="c" style="left:1006px;width:133px"><span style="letter-spacing:0.04px">TUB000003</span></div><div class="c" style="left:1139px;width:501px"><span style="letter-spacing:0.27px">Tubo Antideslizante Abto.Centro S/Imp Microp. 1630 G:150 NATURAL</span></div></div>
<div class="row grn" style="top:651px"><div class="c" style="left:0px;width:122px"><span>P1306122</span></div><div class="c" style="left:122px;width:101px"><span>H1306247</span></div><div class="c" style="left:223px;width:136px"><span style="letter-spacing:0.77px">SERVIDO</span></div><div class="c" style="left:359px;width:118px"><span>p13-01597</span></div><div class="c" style="left:477px;width:103px"><span style="letter-spacing:0.3px">30/05/13</span></div><div class="c" style="left:580px;width:95px"><span style="letter-spacing:0.3px">13/06/13</span></div><div class="c" style="left:675px;width:245px"><span style="letter-spacing:0.28px">CLIENTE 001040</span></div><div class="c" style="left:920px;width:86px"><span style="letter-spacing:0.42px">Tubo</span></div><div class="c" style="left:1006px;width:133px"><span style="letter-spacing:0.04px">TUB000003</span></div><div class="c" style="left:1139px;width:501px"><span style="letter-spacing:0.27px">Tubo Antideslizante Abto.Centro S/Imp Microp. 1630 G:150 NATURAL</span></div></div>
<div class="row grn" style="top:669px"><div class="c" style="left:0px;width:122px"><span>P1205086</span></div><div class="c" style="left:122px;width:101px"><span>H1205086</span></div><div class="c" style="left:223px;width:136px"><span style="letter-spacing:0.77px">SERVIDO</span></div><div class="c" style="left:359px;width:118px"><span style="letter-spacing:0.05px">P12-03111</span></div><div class="c" style="left:477px;width:103px"><span style="letter-spacing:0.3px">09/11/12</span></div><div class="c" style="left:580px;width:95px"><span style="letter-spacing:0.3px">10/12/12</span></div><div class="c" style="left:675px;width:245px"><span style="letter-spacing:0.28px">CLIENTE 001040</span></div><div class="c" style="left:920px;width:86px"><span style="letter-spacing:0.42px">Tubo</span></div><div class="c" style="left:1006px;width:133px"><span style="letter-spacing:0.04px">TUB000003</span></div><div class="c" style="left:1139px;width:501px"><span style="letter-spacing:0.24px">Tubo Antideslizante Abto.Abierto2Lados S/Imp Microp. 1630 G:150 NATURAL</span></div></div>
<div class="row grn" style="top:687px"><div class="c" style="left:0px;width:122px"><span>P1205087</span></div><div class="c" style="left:122px;width:101px"><span>H1205087</span></div><div class="c" style="left:223px;width:136px"><span style="letter-spacing:0.77px">SERVIDO</span></div><div class="c" style="left:359px;width:118px"><span style="letter-spacing:0.05px">P12-03111</span></div><div class="c" style="left:477px;width:103px"><span style="letter-spacing:0.3px">09/11/12</span></div><div class="c" style="left:580px;width:95px"><span style="letter-spacing:0.3px">10/11/12</span></div><div class="c" style="left:675px;width:245px"><span style="letter-spacing:0.28px">CLIENTE 001040</span></div><div class="c" style="left:920px;width:86px"><span style="letter-spacing:0.42px">Tubo</span></div><div class="c" style="left:1006px;width:133px"><span style="letter-spacing:0.04px">TUB000003</span></div><div class="c" style="left:1139px;width:501px"><span style="letter-spacing:0.24px">Tubo Antideslizante Abto.Abierto2Lados S/Imp Microp. 1630 G:150 NATURAL</span></div></div><div id="vsb"><div class="au"><svg width="17" height="17" viewBox="0 0 17 17"><path d="M5.4 10.2 L8.8 6.8 L12.2 10.2" fill="none" stroke="#585858" stroke-width="2.3"/></svg></div><div class="th"></div><div class="ad"><svg width="17" height="17" viewBox="0 0 17 17"><path d="M5.4 6.6 L8.8 10 L12.2 6.6" fill="none" stroke="#585858" stroke-width="2.3"/></svg></div></div></div></div>
</div>
<div id="pbl"></div><div id="pbt"></div>
<div id="status"><b>DISCOM TECHNLOLGY</b><span>0 - admin</span></div>
</body></html>
